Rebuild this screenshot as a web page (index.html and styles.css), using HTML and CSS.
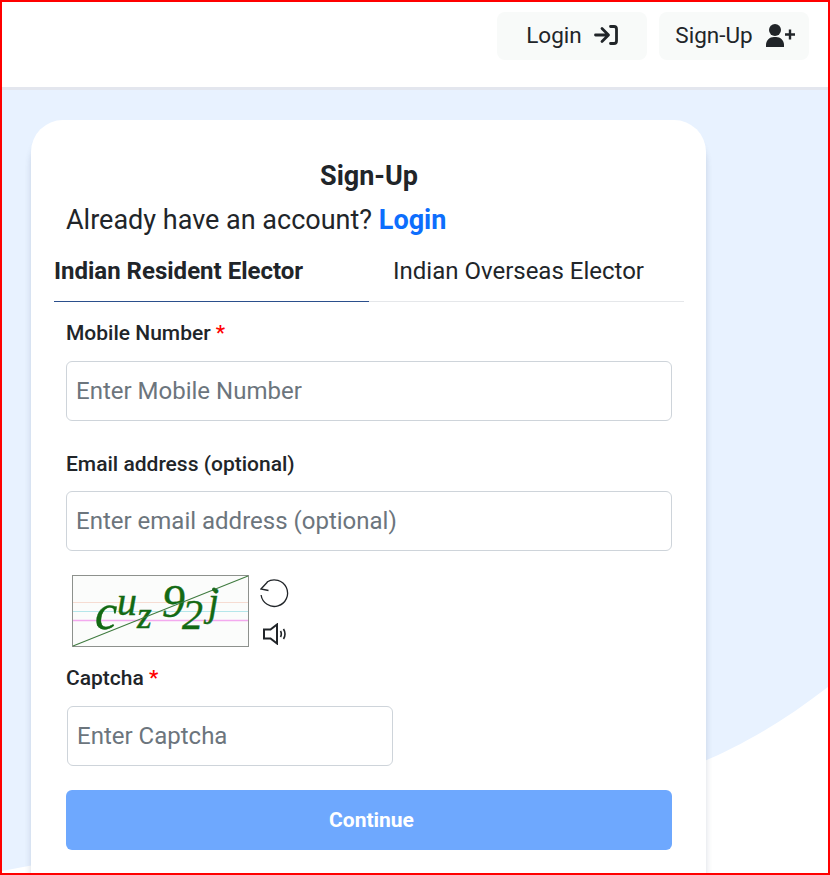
FILE: index.html
```html
<!DOCTYPE html>
<html lang="en">
<head>
  <meta charset="UTF-8">
  <meta name="viewport" content="width=device-width, initial-scale=1.0">
  <title>Sign-Up</title>
  <link rel="stylesheet" href="styles.css">
</head>
<body>
  <div class="frame">
    <header class="topbar">
      <a class="nav-btn nav-login">Login
        <svg class="nav-icon" width="24" height="20" viewBox="0 0 24 20" fill="none" stroke="#212529" stroke-width="2.800" stroke-linecap="round" stroke-linejoin="round">
          <path d="M1.500 10H14M8 3.500l6.500 6.500-6.500 6.500"/>
          <path d="M16.500 1.500H20a2.500 2.500 0 0 1 2.500 2.500v12a2.500 2.500 0 0 1-2.500 2.500h-3.500"/>
        </svg>
      </a>
      <a class="nav-btn nav-signup">Sign-Up
        <svg class="nav-icon" width="30" height="23" viewBox="0 0 30 23" fill="#212529">
          <circle cx="10" cy="6" r="6"/>
          <path d="M1 23v-2c0-4.500 3.500-8 8-8h2c4.500 0 8 3.500 8 8v2z"/>
          <path d="M20 9.300h3.800V5.500h2.400v3.800H30v2.400h-3.800v3.800h-2.400v-3.800H20z"/>
        </svg>
      </a>
    </header>

    <main class="stage">
      <svg class="wave" width="826" height="785" viewBox="0 0 826 785" preserveAspectRatio="none">
        <path d="M0 0H826V597C770 640 720 668 640 695 480 745 200 740 0 781Z" fill="#e8f2ff"/>
      </svg>

      <section class="card">
        <h2 class="card-title">Sign-Up</h2>
        <p class="account-line">Already have an account? <a class="account-link">Login</a></p>

        <div class="tabs">
          <div class="tab tab-active">Indian Resident Elector</div>
          <div class="tab">Indian Overseas Elector</div>
        </div>

        <form class="form">
          <label class="field-label">Mobile Number <span class="req">*</span></label>
          <input class="field-input" type="text" placeholder="Enter Mobile Number">

          <label class="field-label label-email">Email address (optional)</label>
          <input class="field-input input-email" type="text" placeholder="Enter email address (optional)">

          <div class="captcha-row">
            <svg class="captcha" width="177" height="72" viewBox="0 0 177 72">
              <rect x="0.500" y="0.500" width="176" height="71" fill="#fbfcfb" stroke="#8d918d"/>
              <path d="M1 27.500H176" stroke="#f6dcd2"/>
              <path d="M1 36.500H176" stroke="#b5e6ea"/>
              <path d="M1 45.500H176" stroke="#f3a9ee" stroke-width="1.500"/>
              <g class="captcha-text">
                <text x="23" y="54" font-size="50">c</text>
                <text x="45" y="40" font-size="40">u</text>
                <text x="65" y="53" font-size="38">z</text>
                <text x="90" y="42" font-size="46">9</text>
                <text x="110" y="54" font-size="42">2</text>
                <text x="136" y="40" font-size="40">j</text>
              </g>
              <path d="M1 71 176 1" stroke="#3f7a3f" stroke-width="1.100"/>
              <circle cx="142" cy="14.500" r="2" fill="#1f6b1f"/>
            </svg>
            <div class="captcha-tools">
              <svg width="30" height="30" viewBox="0 0 30 30" fill="none" stroke="#212529" stroke-width="1.300">
                <path d="M7 3A13.300 13.300 0 1 1 1.100 16"/>
                <path d="M7.500 3 1 10l7.500 1.500"/>
              </svg>
              <svg class="speaker" width="24" height="22" viewBox="0 0 24 22" fill="none" stroke="#212529" stroke-width="2">
                <path d="M1 6.500H7.500L14 1.500v19L7.500 15.500H1z"/>
                <path d="M17.500 8c1 1.800 1 4.200 0 6M20.500 6c1.800 3 1.800 7 0 10" stroke-width="1.600"/>
              </svg>
            </div>
          </div>

          <label class="field-label label-captcha">Captcha <span class="req">*</span></label>
          <input class="field-input input-captcha" type="text" placeholder="Enter Captcha">

          <button class="submit-btn" type="button">Continue</button>
        </form>
      </section>
    </main>
  </div>
</body>
</html>
```
FILE: styles.css
```css
* {
  box-sizing: border-box;
}
html, body {
  margin: 0;
  padding: 0;
  background: #fff;
}
body {
  font-family: Roboto, "Liberation Sans", sans-serif;
  color: #212529;
}
.frame {
  width: 830px;
  height: 875px;
  border: 2px solid #f00;
  overflow: hidden;
  display: flex;
  flex-direction: column;
}
.topbar {
  flex: none;
  display: flex;
  justify-content: flex-end;
  align-items: flex-start;
  gap: 12px;
  padding: 10px 19px 0 0;
  background: #fff;
  border-bottom: 3px solid #e3e6ee;
  box-sizing: content-box;
  height: 75px;
}
.nav-btn {
  height: 48px;
  width: 150px;
  padding-bottom: 2px;
  display: flex;
  align-items: center;
  justify-content: center;
  background: #f8faf9;
  border-radius: 8px;
  font-size: 22.500px;
  gap: 12px;
}
.nav-icon {
  flex: none;
}
.nav-signup {
  padding-left: 2px;
}
.stage {
  position: relative;
  flex: 1;
  min-height: 0;
}
.wave {
  position: absolute;
  left: 0;
  top: 0;
}
.card {
  position: relative;
  width: 675px;
  height: 800px;
  margin: 30px 0 0 29px;
  padding: 40px 22px 0 23px;
  background: #fff;
  border-radius: 32px;
  box-shadow: 0 12px 6px rgba(50, 70, 110, 0.2);
}
.card-title {
  margin: 0;
  font-size: 27px;
  line-height: 32px;
  font-weight: 700;
  text-align: center;
}
.account-line {
  margin: 12px 0 0 12px;
  font-size: 27px;
  line-height: 32px;
}
.account-link {
  color: #0d6efd;
  font-weight: 700;
}
.tabs {
  display: flex;
  margin-top: 14px;
  height: 52px;
  border-bottom: 1px solid #e5e7ea;
}
.tab {
  width: 315px;
  height: 52px;
  padding-left: 24px;
  font-size: 24px;
  line-height: 42px;
}
.tab-active {
  padding-left: 0;
  font-weight: 700;
  border-bottom: 1px solid #2b4f8c;
}
.form {
  padding: 0 12px;
}
.field-label {
  display: block;
  font-size: 21px;
  font-weight: 500;
  line-height: 24px;
  margin-top: 19px;
}
.req {
  color: #f00;
}
.field-input {
  display: block;
  width: 606px;
  height: 60px;
  margin-top: 16px;
  padding: 0 9px;
  border: 1px solid #ced4da;
  border-radius: 6px;
  font-family: inherit;
  font-size: 24px;
  color: #212529;
  background: #fff;
}
.field-input::placeholder {
  color: #6c757d;
  opacity: 1;
}
.label-email {
  margin-top: 31px;
}
.input-email {
  margin-top: 15px;
}
.captcha-row {
  display: flex;
  align-items: flex-start;
  margin: 24px 0 0 6px;
  gap: 11px;
}
.captcha {
  display: block;
}
.captcha-text text {
  font-family: "Liberation Serif", serif;
  font-style: italic;
  fill: #136a13;
  stroke: #136a13;
  stroke-width: 0.4;
}
.captcha-tools {
  display: flex;
  flex-direction: column;
  align-items: flex-start;
  gap: 14px;
  padding-top: 4px;
}
.speaker {
  margin-left: 3px;
}
.label-captcha {
  margin-top: 19px;
}
.input-captcha {
  width: 326px;
  margin-left: 1px;
}
.submit-btn {
  display: block;
  width: 606px;
  height: 60px;
  margin-top: 24px;
  padding: 0 0 0 5px;
  border: none;
  border-radius: 6px;
  background: #6ea8fe;
  color: #fff;
  font-family: inherit;
  font-size: 21px;
  font-weight: 700;
}
```
